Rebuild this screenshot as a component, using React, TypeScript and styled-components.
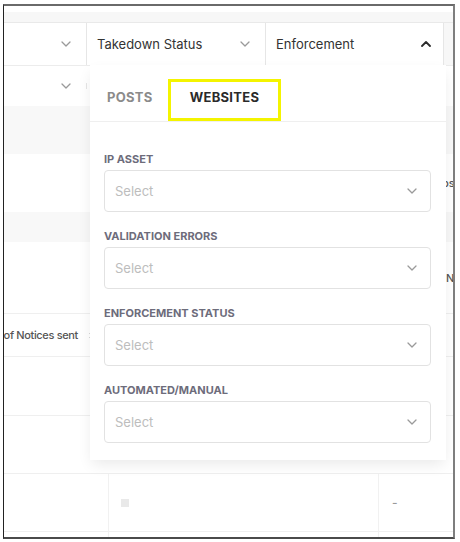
import { createGlobalStyle, styled } from 'styled-components';

const GlobalStyle = createGlobalStyle`
  html, body {
    margin: 0;
    padding: 0;
    background: #ffffff;
    font-family: Inter, 'Open Sans', sans-serif;
  }
`;

const Frame = styled.div`
  position: relative;
  box-sizing: border-box;
  width: 452px;
  height: 535px;
  margin: 4px 0 0 3px;
  border-top: 2px solid #6a6a6a;
  border-left: 1px solid #222222;
  border-right: 2px solid #7e7e7e;
  border-bottom: 2px solid #4a4a4a;
  overflow: hidden;
  background: #ffffff;
`;

const TopStrip = styled.div`
  height: 10px;
  margin-top: 6px;
  background: #f7f7f7;
  border-bottom: 1px solid #e9e9e9;
`;

const FilterRow = styled.div<{ $height: number }>`
  display: flex;
  height: ${(p) => p.$height}px;
  background: #f7f7f7;
  border-bottom: 1px solid #ececec;
`;

const FilterCell = styled.div<{ $width: number; $padRight?: number }>`
  display: flex;
  align-items: center;
  justify-content: space-between;
  box-sizing: border-box;
  width: ${(p) => p.$width}px;
  padding: 0 ${(p) => p.$padRight ?? 15}px 0 10px;
  background: #ffffff;
  border-right: 1px solid #e6e6e6;
  font-size: 13px;
  color: #333333;
`;

const Chevron = ({ up, dark }: { up?: boolean; dark?: boolean }) => (
  <svg width="10" height="6" viewBox="0 0 10 6" fill="none" style={{ flexShrink: 0 }}>
    <polyline
      points={up ? '1,5 5,1 9,5' : '1,1 5,5 9,1'}
      stroke={dark ? '#2b2b2b' : '#9a9a9a'}
      strokeWidth={dark ? 1.8 : 1.3}
      strokeLinecap="round"
      strokeLinejoin="round"
    />
  </svg>
);

const SortIcon = () => (
  <svg width="8" height="11" viewBox="0 0 8 11" fill="none" style={{ flexShrink: 0 }}>
    <path d="M4 1v9M1.5 3.5 4 1l2.5 2.5M1.5 7.5 4 10l2.5-2.5" stroke="#b0b0b0" strokeWidth="1" />
  </svg>
);

const Row = styled.div<{ $height: number; $shade?: boolean; $line?: boolean }>`
  display: flex;
  align-items: center;
  height: ${(p) => p.$height}px;
  background: ${(p) => (p.$shade ? '#f8f8f8' : '#ffffff')};
  border-bottom: 1px solid ${(p) => (p.$line ? '#efefef' : 'transparent')};
`;

const Cell = styled.div<{ $width?: number; $end?: boolean; $pad?: number }>`
  display: flex;
  align-items: center;
  justify-content: ${(p) => (p.$end ? 'flex-end' : 'flex-start')};
  gap: 10px;
  box-sizing: border-box;
  ${(p) => (p.$width ? `width: ${p.$width}px; flex: none;` : 'flex: 1;')}
  height: 100%;
  padding: 0 ${(p) => (p.$end ? 13 : 0)}px 0 ${(p) => p.$pad ?? 0}px;
  white-space: nowrap;
  overflow: hidden;
  font-size: 11px;
  font-weight: 500;
  color: #555555;
`;

const CellText = styled.span`
  flex-shrink: 0;
  letter-spacing: -0.35px;
`;

const DividedCell = styled(Cell)`
  border-right: 1px solid #f1f1f1;
`;

const Placeholder = styled.span`
  width: 8px;
  height: 8px;
  background: #e9e9e9;
`;

const Dash = styled.span`
  color: #9a9a9a;
  font-size: 12px;
`;

const Panel = styled.div`
  position: absolute;
  left: 86px;
  top: 59px;
  width: 356px;
  height: 395px;
  background: #ffffff;
  box-shadow: 0 6px 14px -2px rgba(0, 0, 0, 0.09);
`;

const Tabs = styled.div`
  display: flex;
  align-items: flex-end;
  gap: 15px;
  height: 56px;
  padding-left: 17px;
  border-bottom: 1px solid #efefef;
`;

const Tab = styled.div<{ $active?: boolean }>`
  display: flex;
  align-items: center;
  box-sizing: border-box;
  height: 42px;
  padding: 0 ${(p) => (p.$active ? 19 : 0)}px 6px;
  border: ${(p) => (p.$active ? '3px solid #f4f400' : 'none')};
  font-size: 13px;
  font-weight: 700;
  letter-spacing: 0.3px;
  color: ${(p) => (p.$active ? '#2a2a2a' : '#8b8b8b')};
`;

const Fields = styled.div`
  display: flex;
  flex-direction: column;
  padding: 30px 15px 0 14px;
`;

const Field = styled.div`
  display: flex;
  flex-direction: column;
  gap: 4px;
  margin-bottom: 17px;
`;

const Label = styled.div`
  font-size: 11px;
  line-height: 14px;
  font-weight: 700;
  color: #6d6c7b;
`;

const SelectBox = styled.div`
  display: flex;
  align-items: center;
  justify-content: space-between;
  box-sizing: border-box;
  height: 42px;
  padding: 0 13px 0 10px;
  border: 1px solid #e2e2e2;
  border-radius: 4px;
  font-size: 13px;
  color: #bdbdbd;
`;

const fields = ['IP ASSET', 'VALIDATION ERRORS', 'ENFORCEMENT STATUS', 'AUTOMATED/MANUAL'];

export default function App() {
  return (
    <>
      <GlobalStyle />
      <Frame>
        <TopStrip />
        <FilterRow $height={42}>
          <FilterCell $width={83}>
            <span />
            <Chevron />
          </FilterCell>
          <FilterCell $width={179}>
            Takedown Status
            <Chevron />
          </FilterCell>
          <FilterCell $width={178} $padRight={12}>
            Enforcement
            <Chevron up dark />
          </FilterCell>
        </FilterRow>
        <Row $height={39}>
          <FilterCell $width={83}>
            <span />
            <Chevron />
          </FilterCell>
        </Row>
        <Row $height={47} $shade />
        <Row $height={57}>
          <Cell $pad={421}>Website</Cell>
        </Row>
        <Row $height={29} $shade />
        <Row $height={71} $line>
          <Cell $pad={442}>No</Cell>
        </Row>
        <Row $height={42} $line>
          <Cell $width={105} $end>
            <CellText>No. of Notices sent</CellText>
            <SortIcon />
          </Cell>
        </Row>
        <Row $height={58} $line />
        <Row $height={57} $line />
        <Row $height={57} $line>
          <DividedCell $width={105} />
          <DividedCell $width={270} $pad={12}>
            <Placeholder />
          </DividedCell>
          <Cell $pad={13}>
            <Dash>-</Dash>
          </Cell>
        </Row>
        <Row $height={8}>
          <DividedCell $width={105} />
          <DividedCell $width={270} />
        </Row>

        <Panel>
          <Tabs>
            <Tab>POSTS</Tab>
            <Tab $active>WEBSITES</Tab>
          </Tabs>
          <Fields>
            {fields.map((name) => (
              <Field key={name}>
                <Label>{name}</Label>
                <SelectBox>
                  Select
                  <Chevron />
                </SelectBox>
              </Field>
            ))}
          </Fields>
        </Panel>
      </Frame>
    </>
  );
}
